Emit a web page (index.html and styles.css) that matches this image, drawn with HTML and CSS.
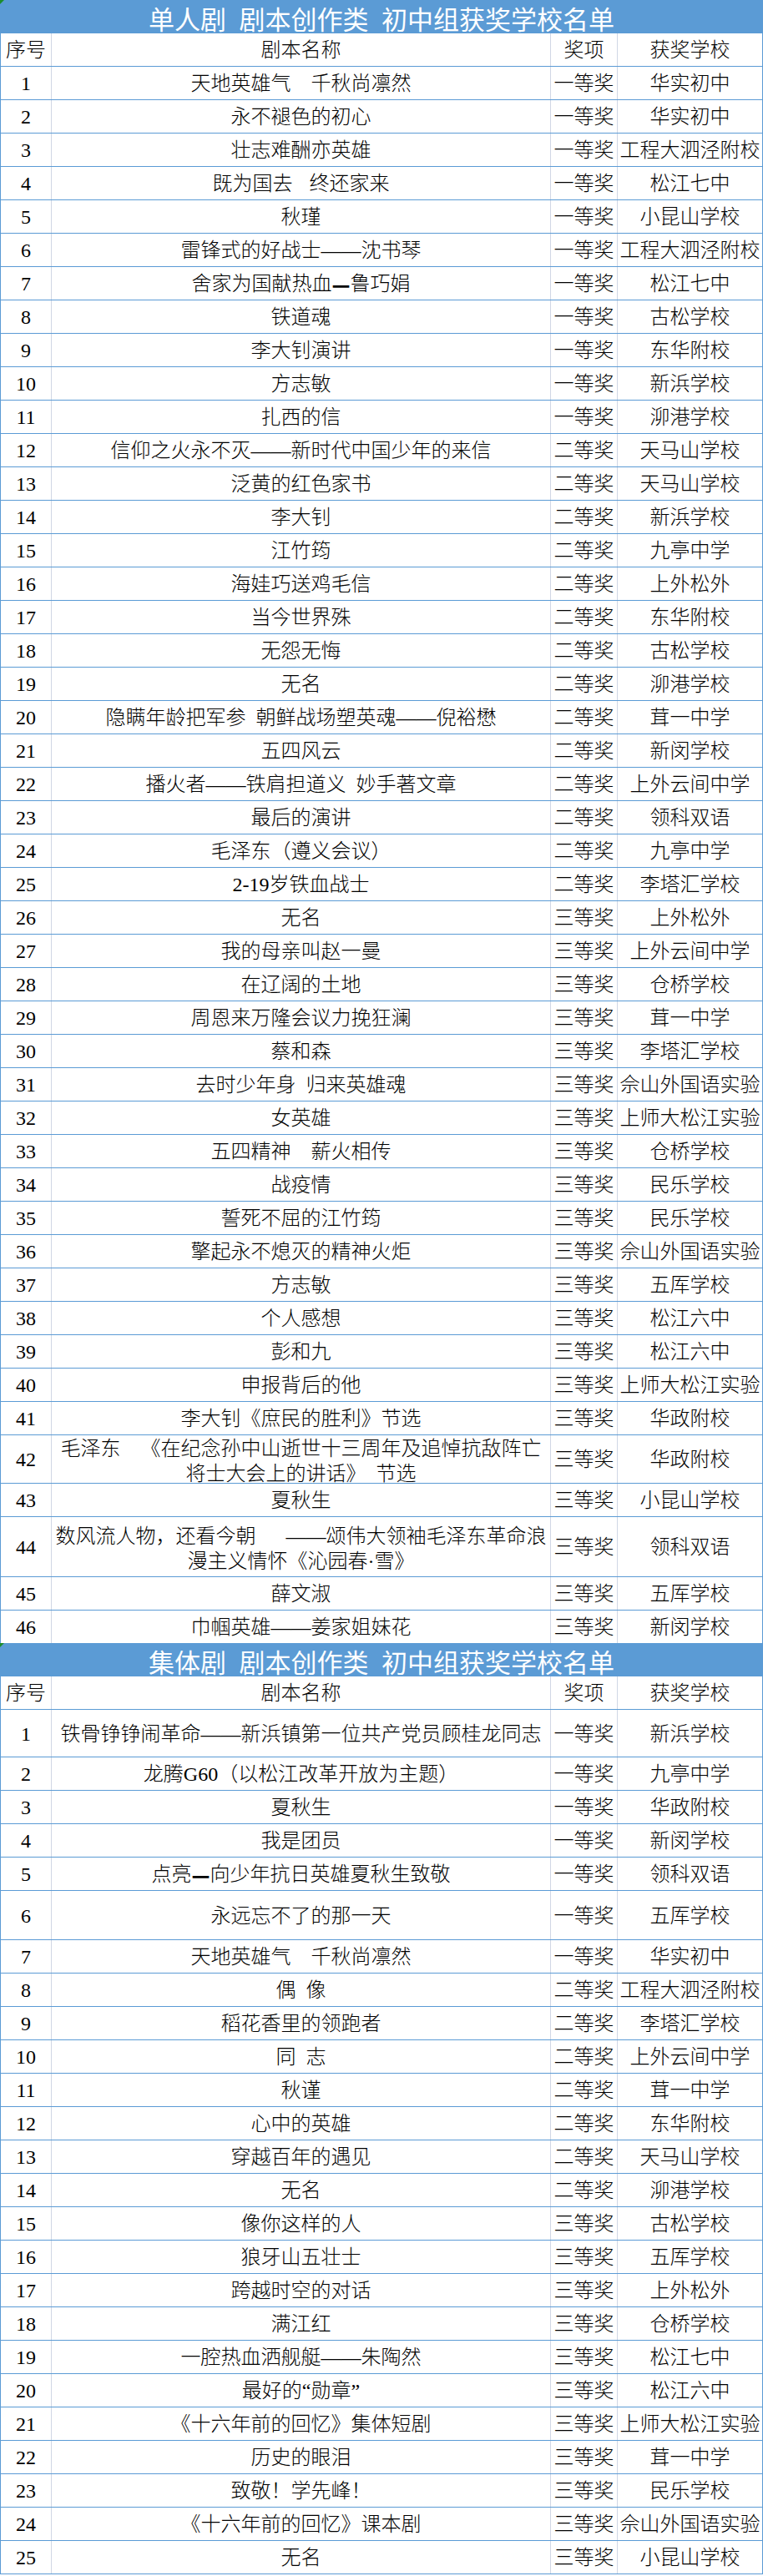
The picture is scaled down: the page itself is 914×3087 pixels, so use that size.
FILE: index.html
```html
<!DOCTYPE html>
<html lang="zh-CN">
<head>
<meta charset="utf-8">
<title>初中组获奖学校名单</title>
<link rel="stylesheet" href="styles.css">
</head>
<body>
<section class="sheet">
  <div class="title">单人剧&ensp;剧本创作类&ensp;初中组获奖学校名单</div>
  <div class="row head"><div class="c n">序号</div><div class="c t">剧本名称</div><div class="c a">奖项</div><div class="c s">获奖学校</div></div>
  <div class="row"><div class="c n">1</div><div class="c t">天地英雄气&emsp;千秋尚凛然</div><div class="c a">一等奖</div><div class="c s">华实初中</div></div>
  <div class="row"><div class="c n">2</div><div class="c t">永不褪色的初心</div><div class="c a">一等奖</div><div class="c s">华实初中</div></div>
  <div class="row"><div class="c n">3</div><div class="c t">壮志难酬亦英雄</div><div class="c a">一等奖</div><div class="c s">工程大泗泾附校</div></div>
  <div class="row"><div class="c n">4</div><div class="c t">既为国去&ensp;&#8196;终还家来</div><div class="c a">一等奖</div><div class="c s">松江七中</div></div>
  <div class="row"><div class="c n">5</div><div class="c t">秋瑾</div><div class="c a">一等奖</div><div class="c s">小昆山学校</div></div>
  <div class="row"><div class="c n">6</div><div class="c t">雷锋式的好战士——沈书琴</div><div class="c a">一等奖</div><div class="c s">工程大泗泾附校</div></div>
  <div class="row"><div class="c n">7</div><div class="c t">舍家为国献热血<b class="dash">—</b>鲁巧娟</div><div class="c a">一等奖</div><div class="c s">松江七中</div></div>
  <div class="row"><div class="c n">8</div><div class="c t">铁道魂</div><div class="c a">一等奖</div><div class="c s">古松学校</div></div>
  <div class="row"><div class="c n">9</div><div class="c t">李大钊演讲</div><div class="c a">一等奖</div><div class="c s">东华附校</div></div>
  <div class="row"><div class="c n">10</div><div class="c t">方志敏</div><div class="c a">一等奖</div><div class="c s">新浜学校</div></div>
  <div class="row"><div class="c n">11</div><div class="c t">扎西的信</div><div class="c a">一等奖</div><div class="c s">泖港学校</div></div>
  <div class="row"><div class="c n">12</div><div class="c t">信仰之火永不灭——新时代中国少年的来信</div><div class="c a">二等奖</div><div class="c s">天马山学校</div></div>
  <div class="row"><div class="c n">13</div><div class="c t">泛黄的红色家书</div><div class="c a">二等奖</div><div class="c s">天马山学校</div></div>
  <div class="row"><div class="c n">14</div><div class="c t">李大钊</div><div class="c a">二等奖</div><div class="c s">新浜学校</div></div>
  <div class="row"><div class="c n">15</div><div class="c t">江竹筠</div><div class="c a">二等奖</div><div class="c s">九亭中学</div></div>
  <div class="row"><div class="c n">16</div><div class="c t">海娃巧送鸡毛信</div><div class="c a">二等奖</div><div class="c s">上外松外</div></div>
  <div class="row"><div class="c n">17</div><div class="c t">当今世界殊</div><div class="c a">二等奖</div><div class="c s">东华附校</div></div>
  <div class="row"><div class="c n">18</div><div class="c t">无怨无悔</div><div class="c a">二等奖</div><div class="c s">古松学校</div></div>
  <div class="row"><div class="c n">19</div><div class="c t">无名</div><div class="c a">二等奖</div><div class="c s">泖港学校</div></div>
  <div class="row"><div class="c n">20</div><div class="c t">隐瞒年龄把军参&ensp;朝鲜战场塑英魂——倪裕懋</div><div class="c a">二等奖</div><div class="c s">茸一中学</div></div>
  <div class="row"><div class="c n">21</div><div class="c t">五四风云</div><div class="c a">二等奖</div><div class="c s">新闵学校</div></div>
  <div class="row"><div class="c n">22</div><div class="c t">播火者——铁肩担道义&ensp;妙手著文章</div><div class="c a">二等奖</div><div class="c s">上外云间中学</div></div>
  <div class="row"><div class="c n">23</div><div class="c t">最后的演讲</div><div class="c a">二等奖</div><div class="c s">领科双语</div></div>
  <div class="row"><div class="c n">24</div><div class="c t">毛泽东（遵义会议）</div><div class="c a">二等奖</div><div class="c s">九亭中学</div></div>
  <div class="row"><div class="c n">25</div><div class="c t">2-19岁铁血战士</div><div class="c a">二等奖</div><div class="c s">李塔汇学校</div></div>
  <div class="row"><div class="c n">26</div><div class="c t">无名</div><div class="c a">三等奖</div><div class="c s">上外松外</div></div>
  <div class="row"><div class="c n">27</div><div class="c t">我的母亲叫赵一曼</div><div class="c a">三等奖</div><div class="c s">上外云间中学</div></div>
  <div class="row"><div class="c n">28</div><div class="c t">在辽阔的土地</div><div class="c a">三等奖</div><div class="c s">仓桥学校</div></div>
  <div class="row"><div class="c n">29</div><div class="c t">周恩来万隆会议力挽狂澜</div><div class="c a">三等奖</div><div class="c s">茸一中学</div></div>
  <div class="row"><div class="c n">30</div><div class="c t">蔡和森</div><div class="c a">三等奖</div><div class="c s">李塔汇学校</div></div>
  <div class="row"><div class="c n">31</div><div class="c t">去时少年身&ensp;归来英雄魂</div><div class="c a">三等奖</div><div class="c s">佘山外国语实验</div></div>
  <div class="row"><div class="c n">32</div><div class="c t">女英雄</div><div class="c a">三等奖</div><div class="c s">上师大松江实验</div></div>
  <div class="row"><div class="c n">33</div><div class="c t">五四精神&emsp;薪火相传</div><div class="c a">三等奖</div><div class="c s">仓桥学校</div></div>
  <div class="row"><div class="c n">34</div><div class="c t">战疫情</div><div class="c a">三等奖</div><div class="c s">民乐学校</div></div>
  <div class="row"><div class="c n">35</div><div class="c t">誓死不屈的江竹筠</div><div class="c a">三等奖</div><div class="c s">民乐学校</div></div>
  <div class="row"><div class="c n">36</div><div class="c t">擎起永不熄灭的精神火炬</div><div class="c a">三等奖</div><div class="c s">佘山外国语实验</div></div>
  <div class="row"><div class="c n">37</div><div class="c t">方志敏</div><div class="c a">三等奖</div><div class="c s">五厍学校</div></div>
  <div class="row"><div class="c n">38</div><div class="c t">个人感想</div><div class="c a">三等奖</div><div class="c s">松江六中</div></div>
  <div class="row"><div class="c n">39</div><div class="c t">彭和九</div><div class="c a">三等奖</div><div class="c s">松江六中</div></div>
  <div class="row"><div class="c n">40</div><div class="c t">申报背后的他</div><div class="c a">三等奖</div><div class="c s">上师大松江实验</div></div>
  <div class="row"><div class="c n">41</div><div class="c t">李大钊《庶民的胜利》节选</div><div class="c a">三等奖</div><div class="c s">华政附校</div></div>
  <div class="row r58"><div class="c n">42</div><div class="c t wrap">毛泽东&emsp;《在纪念孙中山逝世十三周年及追悼抗敌阵亡<br>将士大会上的讲话》&ensp;节选</div><div class="c a">三等奖</div><div class="c s">华政附校</div></div>
  <div class="row"><div class="c n">43</div><div class="c t">夏秋生</div><div class="c a">三等奖</div><div class="c s">小昆山学校</div></div>
  <div class="row r72"><div class="c n">44</div><div class="c t wrap">数风流人物，还看今朝&emsp;&ensp;——颂伟大领袖毛泽东革命浪<br>漫主义情怀《沁园春·雪》</div><div class="c a">三等奖</div><div class="c s">领科双语</div></div>
  <div class="row"><div class="c n">45</div><div class="c t">薛文淑</div><div class="c a">三等奖</div><div class="c s">五厍学校</div></div>
  <div class="row last"><div class="c n">46</div><div class="c t">巾帼英雄——姜家姐妹花</div><div class="c a">三等奖</div><div class="c s">新闵学校</div></div>
</section>

<section class="sheet">
  <div class="title">集体剧&ensp;剧本创作类&ensp;初中组获奖学校名单</div>
  <div class="row head"><div class="c n">序号</div><div class="c t">剧本名称</div><div class="c a">奖项</div><div class="c s">获奖学校</div></div>
  <div class="row r57"><div class="c n">1</div><div class="c t">铁骨铮铮闹革命——新浜镇第一位共产党员顾桂龙同志</div><div class="c a">一等奖</div><div class="c s">新浜学校</div></div>
  <div class="row"><div class="c n">2</div><div class="c t">龙腾G60（以松江改革开放为主题）</div><div class="c a">一等奖</div><div class="c s">九亭中学</div></div>
  <div class="row"><div class="c n">3</div><div class="c t">夏秋生</div><div class="c a">一等奖</div><div class="c s">华政附校</div></div>
  <div class="row"><div class="c n">4</div><div class="c t">我是团员</div><div class="c a">一等奖</div><div class="c s">新闵学校</div></div>
  <div class="row"><div class="c n">5</div><div class="c t">点亮<b class="dash">—</b>向少年抗日英雄夏秋生致敬</div><div class="c a">一等奖</div><div class="c s">领科双语</div></div>
  <div class="row r59"><div class="c n">6</div><div class="c t">永远忘不了的那一天</div><div class="c a">一等奖</div><div class="c s">五厍学校</div></div>
  <div class="row"><div class="c n">7</div><div class="c t">天地英雄气&emsp;千秋尚凛然</div><div class="c a">一等奖</div><div class="c s">华实初中</div></div>
  <div class="row"><div class="c n">8</div><div class="c t">偶&ensp;像</div><div class="c a">二等奖</div><div class="c s">工程大泗泾附校</div></div>
  <div class="row"><div class="c n">9</div><div class="c t">稻花香里的领跑者</div><div class="c a">二等奖</div><div class="c s">李塔汇学校</div></div>
  <div class="row"><div class="c n">10</div><div class="c t">同&ensp;志</div><div class="c a">二等奖</div><div class="c s">上外云间中学</div></div>
  <div class="row"><div class="c n">11</div><div class="c t">秋谨</div><div class="c a">二等奖</div><div class="c s">茸一中学</div></div>
  <div class="row"><div class="c n">12</div><div class="c t">心中的英雄</div><div class="c a">二等奖</div><div class="c s">东华附校</div></div>
  <div class="row"><div class="c n">13</div><div class="c t">穿越百年的遇见</div><div class="c a">二等奖</div><div class="c s">天马山学校</div></div>
  <div class="row"><div class="c n">14</div><div class="c t">无名</div><div class="c a">二等奖</div><div class="c s">泖港学校</div></div>
  <div class="row"><div class="c n">15</div><div class="c t">像你这样的人</div><div class="c a">三等奖</div><div class="c s">古松学校</div></div>
  <div class="row"><div class="c n">16</div><div class="c t">狼牙山五壮士</div><div class="c a">三等奖</div><div class="c s">五厍学校</div></div>
  <div class="row"><div class="c n">17</div><div class="c t">跨越时空的对话</div><div class="c a">三等奖</div><div class="c s">上外松外</div></div>
  <div class="row"><div class="c n">18</div><div class="c t">满江红</div><div class="c a">三等奖</div><div class="c s">仓桥学校</div></div>
  <div class="row"><div class="c n">19</div><div class="c t">一腔热血洒舰艇——朱陶然</div><div class="c a">三等奖</div><div class="c s">松江七中</div></div>
  <div class="row"><div class="c n">20</div><div class="c t">最好的“勋章”</div><div class="c a">三等奖</div><div class="c s">松江六中</div></div>
  <div class="row"><div class="c n">21</div><div class="c t">《十六年前的回忆》集体短剧</div><div class="c a">三等奖</div><div class="c s">上师大松江实验</div></div>
  <div class="row"><div class="c n">22</div><div class="c t">历史的眼泪</div><div class="c a">三等奖</div><div class="c s">茸一中学</div></div>
  <div class="row"><div class="c n">23</div><div class="c t">致敬！学先峰！</div><div class="c a">三等奖</div><div class="c s">民乐学校</div></div>
  <div class="row"><div class="c n">24</div><div class="c t">《十六年前的回忆》课本剧</div><div class="c a">三等奖</div><div class="c s">佘山外国语实验</div></div>
  <div class="row"><div class="c n">25</div><div class="c t">无名</div><div class="c a">三等奖</div><div class="c s">小昆山学校</div></div>
</section>
</body>
</html>
```

FILE: styles.css
```css
html, body {
  margin: 0;
  padding: 0;
  background: #ffffff;
}

body {
  width: 914px;
  font-family: "Liberation Serif", "Noto Sans CJK SC", serif;
  color: #000000;
}

.sheet {
  display: flex;
  flex-direction: column;
}

.title {
  position: relative;
  height: 40px;
  display: flex;
  align-items: center;
  justify-content: center;
  padding-top: 2px;
  box-sizing: border-box;
  background: #5b9bd5;
  color: #ffffff;
  font-family: "Noto Sans CJK SC", sans-serif;
  font-size: 31px;
  letter-spacing: 0;
  white-space: nowrap;
}

.title::before {
  content: "";
  position: absolute;
  left: 0;
  top: 0;
  border-top: 5px solid #1c8c2c;
  border-right: 5px solid transparent;
}

.row {
  display: grid;
  grid-template-columns: 61px 598px 80px 1fr;
  height: 40px;
  box-sizing: border-box;
  border-left: 1px solid #5b9bd5;
  border-right: 1px solid #5b9bd5;
  border-bottom: 1px solid #5b9bd5;
}

.row.last {
  border-bottom: none;
  height: 39px;
}

.r57 { height: 57px; }
.r58 { height: 58px; }
.r59 { height: 59px; }
.r72 { height: 72px; }

.c {
  display: flex;
  align-items: center;
  justify-content: center;
  text-align: center;
  box-sizing: border-box;
  border-right: 1px solid #d0d7e5;
  font-size: 24px;
  font-weight: 300;
  line-height: 1.2;
  padding-top: 2px;
  white-space: nowrap;
  overflow: hidden;
}

.c.s {
  border-right: none;
}

.c.n {
  font-size: 24px;
}

.c.wrap {
  white-space: normal;
  line-height: 30px;
  padding-top: 4px;
}

.dash {
  font-weight: 900;
  font-family: "Noto Sans CJK SC", sans-serif;
}
```
